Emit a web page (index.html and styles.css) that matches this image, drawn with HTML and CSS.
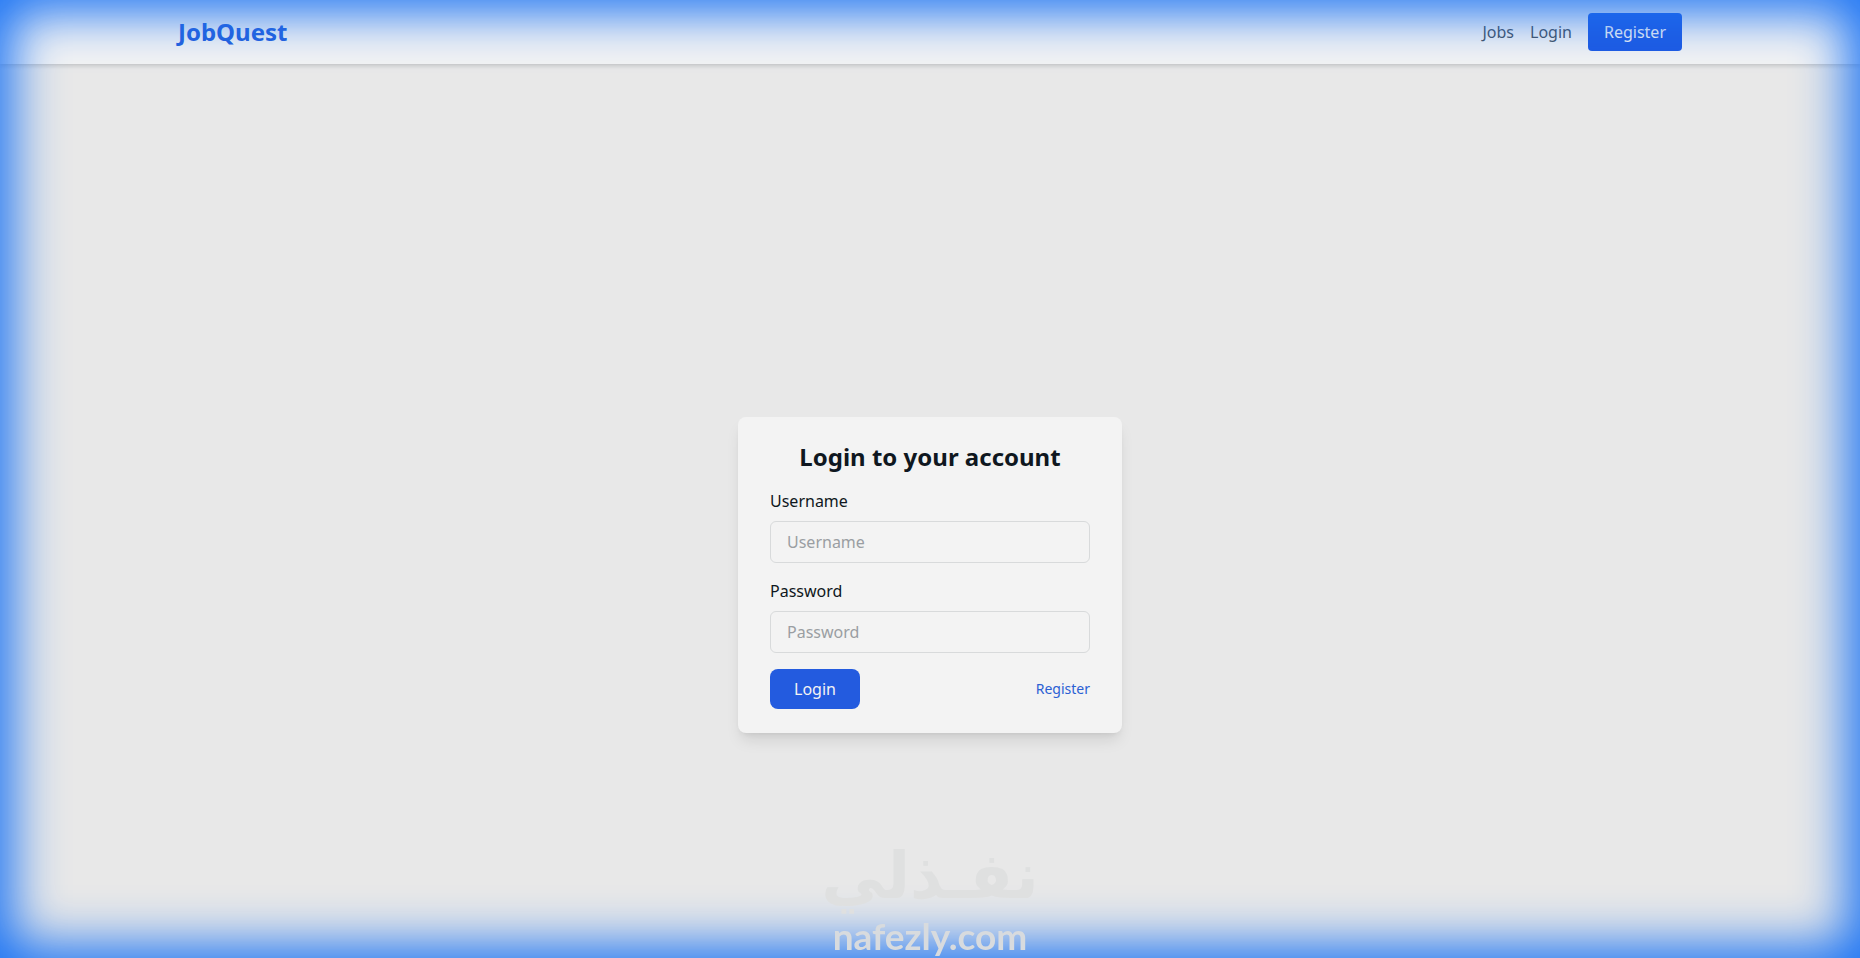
FILE: index.html
```
<!DOCTYPE html>
<html lang="en">
<head>
  <meta charset="UTF-8" />
  <meta name="viewport" content="width=device-width, initial-scale=1.0"/>
  <title>JobQuest - Login</title>
  <link rel="stylesheet" href="styles.css">
</head>
<body>

  <header class="header">
    <div class="container">
      <a class="logo" href="#">JobQuest</a>
      <nav class="nav">
        <a href="#">Jobs</a>
        <a href="#">Login</a>
        <a class="nav-button" href="#">Register</a>
      </nav>
    </div>
  </header>

  <main class="main">
    <form class="card">
      <h1>Login to your account</h1>
      <div class="field">
        <label for="username">Username</label>
        <input type="text" id="username" placeholder="Username" />
      </div>
      <div class="field">
        <label for="password">Password</label>
        <input type="password" id="password" placeholder="Password" />
      </div>
      <div class="actions">
        <button type="submit">Login</button>
        <a href="#">Register</a>
      </div>
    </form>
  </main>

  <div class="glow"></div>

  <div class="watermark">
    <span class="watermark-ar" lang="ar" dir="rtl">نفـذلي</span>
    <span class="watermark-en">nafezly.com</span>
  </div>

</body>
</html>
```
FILE: styles.css
```
* {
  box-sizing: border-box;
}

body {
  margin: 0;
  min-height: 100vh;
  display: flex;
  flex-direction: column;
  font-family: "Noto Sans", sans-serif;
  font-size: 16px;
  line-height: 24px;
  color: #0f1720;
  background-color: #e8e8e8;
}

a {
  text-decoration: none;
}

.header {
  background-color: #f3f3f3;
  box-shadow: 0 2px 4px rgba(0, 0, 0, 0.15);
}

.container {
  max-width: 1536px;
  height: 64px;
  margin: 0 auto;
  padding: 0 16px;
  display: flex;
  align-items: center;
  justify-content: space-between;
}

.logo {
  font-size: 24px;
  line-height: 32px;
  font-weight: bold;
  color: #2460dc;
}

.nav {
  display: flex;
  align-items: center;
  gap: 16px;
}

.nav a {
  color: #465260;
}

.nav .nav-button {
  padding: 8px 16px;
  line-height: 22px;
  border-radius: 4px;
  background-color: #1d5ae2;
  color: #f3f3f3;
}

.main {
  flex: 1;
  display: flex;
  align-items: center;
  justify-content: center;
  padding-top: 128px;
}

.card {
  width: 384px;
  padding: 24px 32px;
  display: flex;
  flex-direction: column;
  gap: 16px;
  border-radius: 8px;
  background-color: #f3f3f3;
  box-shadow: 0 10px 15px -3px rgba(0, 0, 0, 0.1), 0 4px 6px -4px rgba(0, 0, 0, 0.1);
}

.card h1 {
  margin: 0;
  font-size: 24px;
  line-height: 32px;
  text-align: center;
}

.field {
  display: flex;
  flex-direction: column;
  gap: 8px;
}

.field input {
  width: 100%;
  height: 42px;
  padding: 8px 16px;
  font: inherit;
  color: inherit;
  border: 1px solid #d8dadb;
  border-radius: 6px;
  background-color: transparent;
}

.field input::placeholder {
  color: #9a9ea2;
}

.actions {
  display: flex;
  align-items: center;
  justify-content: space-between;
}

.actions button {
  padding: 8px 24px;
  font: inherit;
  border: none;
  border-radius: 8px;
  background-color: #235bdf;
  color: #f3f3f3;
  cursor: pointer;
}

.actions a {
  font-size: 14px;
  color: #2b60d4;
}

/* blue light around the window */
.glow {
  position: fixed;
  inset: 0;
  pointer-events: none;
  box-shadow: inset 0 0 50px 13px #1c74f4;
}

.watermark {
  position: fixed;
  left: 0;
  right: 0;
  bottom: 0;
  display: flex;
  flex-direction: column;
  align-items: center;
  pointer-events: none;
}

.watermark-ar {
  font-family: "DejaVu Sans", sans-serif;
  font-size: 64px;
  line-height: 76px;
  font-weight: bold;
  color: #dfe0e0;
}

.watermark-en {
  font-family: Lato, sans-serif;
  font-size: 37px;
  line-height: 44px;
  font-weight: bold;
  color: #d8dbde;
}
```
